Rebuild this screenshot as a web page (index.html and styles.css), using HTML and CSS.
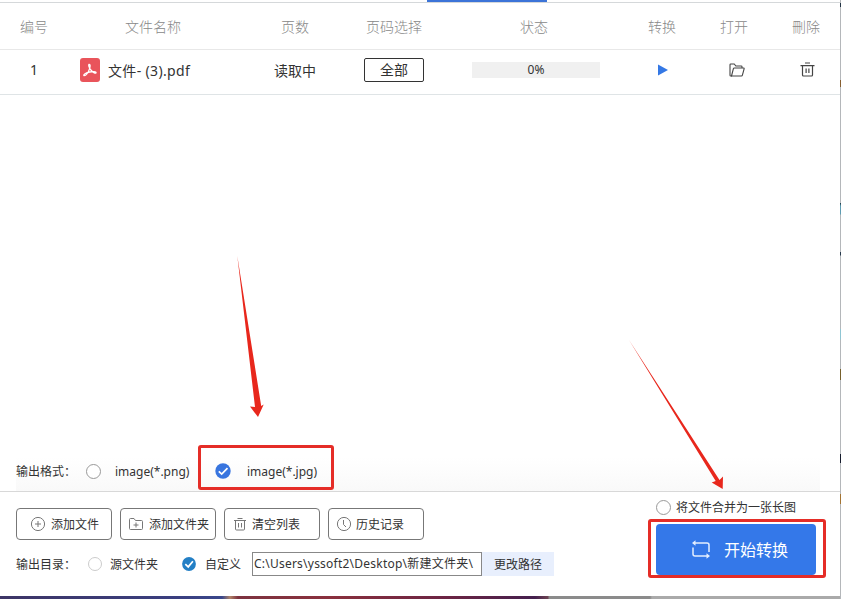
FILE: index.html
```html
<!DOCTYPE html>
<html lang="zh-CN">
<head>
<meta charset="UTF-8">
<title>PDF转图片</title>
<link rel="stylesheet" href="styles.css">
</head>
<body>
<div class="window">
	<div class="tabs"><span class="tab-active"></span></div>

	<div class="row head">
		<span>编号</span>
		<span>文件名称</span>
		<span>页数</span>
		<span>页码选择</span>
		<span>状态</span>
		<span>转换</span>
		<span>打开</span>
		<span>刪除</span>
	</div>
	<div class="row file">
		<span>1</span>
		<span class="name">
			<svg width="20" height="24" viewBox="0 0 20 24"><rect width="20" height="24" rx="3" fill="#e9545b"/><path d="M9 6.300c1.800-.3 1 3.200.3 5.100C8.300 14.300 6 17.700 4.100 17.600 2.800 17 6 14.600 9.600 14c3.400-.6 6.500-.6 6.500.6 0 1.600-4-.4-5.900-3.400C9 9.200 8.200 6.700 9 6.300z" fill="none" stroke="#fff" stroke-width="1.300"/></svg>
			<b>文件- (3).pdf</b>
		</span>
		<span>读取中</span>
		<span><button class="pages">全部</button></span>
		<span><i class="progress">0%</i></span>
		<span class="play"><svg width="10" height="12" viewBox="0 0 10 12"><path d="M0 .5v11L10 6z" fill="#3478e5"/></svg></span>
		<span class="shift"><svg width="16" height="14" viewBox="0 0 16 14" fill="none" stroke="#444" stroke-width="1.100" stroke-linejoin="round"><path d="M3 13H1.800Q1 13 1 12.200V1.800Q1 1 1.800 1h3.500l1.500 2h5.400q.8 0 .8.800V5"/><path d="M2.500 13 4.400 5.700Q4.600 5 5.400 5h9.100q.8 0 .6.800l-1.700 6.400q-.2.800-1 .8z"/></svg></span>
		<span class="shift del"><svg width="15" height="15" viewBox="0 0 15 15" fill="none" stroke="#444" stroke-width="1.200"><path d="M5 1h5M.5 3.600h14M2.500 3.600V13q0 1 1 1h8q1 0 1-1V3.600M6.100 6.500v4.500M8.900 6.500v4.500"/></svg></span>
	</div>

	<div class="list"></div>

	<div class="formats">
		<span class="label">输出格式：</span>
		<i class="radio"></i>
		<span class="png">image(*.png)</span>
		<svg class="check" width="16" height="16" viewBox="0 0 16 16"><circle cx="8" cy="8" r="7.700" fill="#3875df"/><path d="M3.800 8.300l2.900 2.700L12.500 5.200" fill="none" stroke="#fff" stroke-width="1.700"/></svg>
		<span>image(*.jpg)</span>
	</div>

	<div class="footer">
		<div class="left">
			<div class="buttons">
				<button>
					<svg width="16" height="16" viewBox="0 0 16 16" fill="none" stroke="#777" stroke-width="1"><circle cx="8" cy="8" r="6.600"/><path d="M5 8h6M8 5v6"/></svg>
					添加文件
				</button>
				<button class="folder">
					<svg width="16" height="16" viewBox="0 0 16 16" fill="none" stroke="#777" stroke-width="1"><path d="M1.500 3.500q0-1 1-1H6l1.500 2h6q1 0 1 1v7q0 1-1 1h-11q-1 0-1-1zM5.500 9h5M8 6.500v5"/></svg>
					添加文件夹
				</button>
				<button class="clear">
					<svg width="14" height="16" viewBox="0 0 14 16" fill="none" stroke="#777" stroke-width="1"><path d="M4.500 2.500h5M1 4.500h12M2.500 4.500V13q0 1 1 1h7q1 0 1-1V4.500M5.500 7v4.500M8.500 7v4.500"/></svg>
					清空列表
				</button>
				<button class="history">
					<svg width="16" height="16" viewBox="0 0 16 16" fill="none" stroke="#777" stroke-width="1"><circle cx="8" cy="8" r="6.600"/><path d="M7.500 4v4.500l2.500 2.500"/></svg>
					历史记录
				</button>
			</div>
			<div class="output">
				<span class="label">输出目录：</span>
				<i class="radio small"></i>
				<span class="source">源文件夹</span>
				<svg width="14" height="14" viewBox="0 0 14 14"><circle cx="7" cy="7" r="6.900" fill="#237fc5"/><path d="M3.300 7.200 6.200 9.900l4.700-5.700" fill="none" stroke="#fff" stroke-width="1.700"/></svg>
				<span class="custom">自定义</span>
				<span class="path">C:\Users\yssoft2\Desktop\新建文件夹\</span>
				<button class="change">更改路径</button>
			</div>
		</div>
		<div class="right">
			<div class="merge"><i class="radio"></i><span>将文件合并为一张长图</span></div>
			<button class="start">
				<svg width="20" height="20" viewBox="0 0 20 20"><path d="M3 4h13q2 0 2 2v7M17 17H4q-2 0-2-2V8.500" fill="none" stroke="#e4eefe" stroke-width="1.500"/><path d="M1 4l3.500-2.700v5.400zM19 17l-3.500-2.700v5.400z" fill="#e4eefe"/></svg>
				<span>开始转换</span>
			</button>
		</div>
	</div>
</div>
<div class="desktop-bottom"></div>
<div class="desktop-right"></div>

<!-- marks on top of the window -->
<div class="mark mark-format"></div>
<div class="mark mark-start"></div>
<svg class="arrows" width="841" height="599" viewBox="0 0 841 599" fill="#e8271c">
	<path d="M237.300 256 261.200 406l2.500-1.500-5.700 12.500-8-10.500 5 .5z"/>
	<path d="M629 340l90.500 140 3.500-3.500-.3 12.500-11-6.500 4-1.500z"/>
</svg>
</body>
</html>
```

FILE: styles.css
```css
* {
	box-sizing: border-box;
}
body {
	margin: 0;
	width: 841px;
	height: 599px;
	overflow: hidden;
	position: relative;
	font-family: "Noto Sans", "Noto Sans CJK SC", sans-serif;
	font-size: 12px;
	color: #333;
}
button {
	font: inherit;
	color: inherit;
	background: none;
	padding: 0;
	margin: 0;
}
svg {
	display: block;
	flex: none;
}
i, b {
	font-style: normal;
	font-weight: normal;
}
.window {
	width: 840px;
	height: 596px;
	background: #fff;
	display: flex;
	flex-direction: column;
}
.tabs {
	height: 3px;
	border-bottom: 1px solid #d5d8da;
	padding-left: 427px;
}
.tab-active {
	display: block;
	width: 120px;
	height: 2px;
	background: #3c74d8;
}

/* file table */
.row {
	display: grid;
	grid-template-columns: 68px 170px 114px 84px 196px 60px 84px 60px;
	align-items: center;
	justify-items: center;
	font-size: 14px;
	white-space: nowrap;
}
.head {
	height: 47px;
	padding-bottom: 1px;
	border-bottom: 1px solid #e8e8e8;
	color: #888;
	font-weight: 300;
}
.file {
	height: 45px;
	padding-bottom: 5px;
	border-bottom: 1px solid #dfe4e6;
}
.name {
	justify-self: start;
	padding-left: 12px;
	display: flex;
	align-items: center;
	gap: 8px;
}
.name b {
	letter-spacing: .35px;
}
.pages {
	display: block;
	width: 60px;
	height: 24px;
	line-height: 22px;
	border: 1px solid #333;
	border-radius: 2px;
}
.progress {
	display: block;
	width: 128px;
	height: 16px;
	margin-left: 4px;
	line-height: 16px;
	text-align: center;
	font-size: 12px;
	background: #f0f0f0;
}
.play {
	padding-left: 1px;
}
.shift {
	padding-left: 5px;
}
.del {
	padding-left: 3px;
}
.list {
	flex: 1;
}

/* output format */
.formats {
	height: 34px;
	margin: 0 20px 0 16px;
	padding-bottom: 6px;
	display: flex;
	align-items: center;
	background: linear-gradient(#fff, #f9f9f9);
	white-space: nowrap;
}
.label {
	width: 70px;
	white-space: nowrap;
}
.radio {
	flex: none;
	width: 15px;
	height: 15px;
	border: 1px solid #999;
	border-radius: 50%;
	background: #fff;
}
.radio.small {
	width: 14px;
	height: 14px;
	border-color: #ccc;
}
.png {
	width: 100px;
	margin-left: 14px;
}
.check {
	margin-right: 16px;
}

.footer {
	height: 105px;
	border-top: 1px solid #d8d8d8;
	display: flex;
	justify-content: space-between;
	padding: 0 24px 0 16px;
}
.left {
	padding-top: 16px;
}
.buttons {
	display: flex;
	gap: 8px;
}
.buttons button {
	width: 96px;
	height: 32px;
	border: 1px solid #777;
	border-radius: 4px;
	display: flex;
	align-items: center;
	gap: 5px;
	padding-left: 13px;
	white-space: nowrap;
}
.buttons .folder {
	padding-left: 7px;
}
.buttons .clear {
	padding-left: 8px;
}
.buttons .history {
	padding-left: 7px;
	gap: 4px;
}
.output {
	margin-top: 12px;
	height: 24px;
	display: flex;
	align-items: center;
	white-space: nowrap;
}
.output .label {
	width: 72px;
}
.source {
	width: 72px;
	margin-left: 8px;
}
.custom {
	width: 47px;
	margin-left: 9px;
}
.path {
	width: 230px;
	height: 24px;
	line-height: 22px;
	padding-left: 1px;
	border: 1px solid #888;
	letter-spacing: .23px;
}
.change {
	width: 72px;
	height: 24px;
	border: 0;
	background: #e8effd;
}
.right {
	width: 160px;
	padding-top: 6px;
}
.merge {
	height: 18px;
	display: flex;
	align-items: center;
	gap: 5px;
	white-space: nowrap;
}
.start {
	width: 160px;
	height: 51px;
	margin-top: 8px;
	border: 0;
	border-radius: 4px;
	background: #3478e9;
	color: #fff;
	font-size: 16px;
	display: flex;
	align-items: center;
	gap: 13px;
	padding: 0 0 1px 35px;
}

/* what shows of the desktop round the window */
.desktop-bottom {
	height: 3px;
	background: linear-gradient(90deg, #3d3566 0, #3a3f80 180px, #39478b 222px, #b08368 230px, #7d3340 238px, #8a303d 330px, #6b2444 450px, #45204e 535px, #6c4351 548px, #8b8b8b 549px, #8b8b8b 650px, #aaa 652px, #aaa 100%);
}
.desktop-right {
	position: absolute;
	right: 0;
	top: 0;
	width: 1px;
	height: 599px;
	background: linear-gradient(#b4b7ba 3px, #234 3px, #234 7px, #b4b7ba 7px, #b4b7ba 80px, #865e30 80px, #865e30 87px, #b4b7ba 87px, #b4b7ba 203px, #17323f 203px, #5d9cb2 206px, #5d9cb2 214px, #b4b7ba 215px, #b4b7ba 252px, #26394c 252px, #26394c 255px, #b4b7ba 256px, #b4b7ba 329px, #8ec5d3 329px, #8ec5d3 339px, #b4b7ba 340px, #b4b7ba 369px, #76602c 369px, #76602c 380px, #b4b7ba 380px, #b4b7ba 454px, #151b2c 454px, #151b2c 463px, #b4b7ba 463px, #b4b7ba 494px, #a37332 494px, #a37332 504px, #b4b7ba 504px);
}

.mark {
	position: absolute;
	border: 3px solid #e52d27;
	border-radius: 3px;
}
.mark-format {
	left: 198px;
	top: 445px;
	width: 136px;
	height: 45px;
}
.mark-start {
	left: 648px;
	top: 519px;
	width: 178px;
	height: 59px;
}
.arrows {
	position: absolute;
	left: 0;
	top: 0;
}
```
